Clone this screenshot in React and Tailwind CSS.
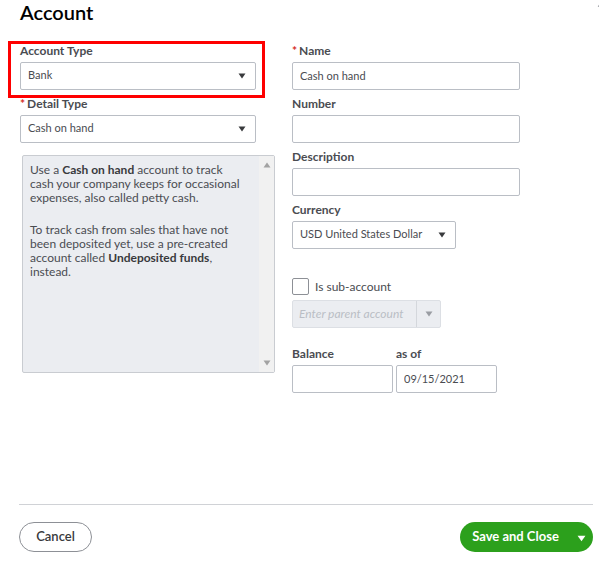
import React from 'react';

const inputClass = 'block h-7 w-full min-w-0 rounded-[2px] border border-[#babec5] bg-white px-[7px] pb-px text-[11px] text-[#4a4c51] outline-none';

const Caret = ({ className }) => (
  <svg viewBox="0 0 8 6" className={className} aria-hidden="true">
    <path d="M0.5 0.5h7L4 5.5z" fill="currentColor" />
  </svg>
);

const Label = ({ htmlFor, required, children }) => (
  <label htmlFor={htmlFor} className="block h-5 text-xs leading-[18px] font-bold whitespace-nowrap text-[#4a4c51]">
    {required && <span className="mr-0.5 text-[#d52b1e]">*</span>}
    {children}
  </label>
);

const SelectBox = ({ id, value }) => (
  <div className="relative">
    <select id={id} defaultValue={value} className={`appearance-none ${inputClass}`}>
      <option>{value}</option>
    </select>
    <Caret className="pointer-events-none absolute top-[11px] right-2.5 h-1.5 w-2 text-[#393a3d]" />
  </div>
);

const TextField = ({ id, label, required, value = '' }) => (
  <div>
    <Label htmlFor={id} required={required}>{label}</Label>
    <input id={id} type="text" defaultValue={value} className={inputClass} />
  </div>
);

const DetailInfo = () => (
  <div className="mt-3 ml-0.5 flex h-[218px] rounded-[2px] border border-[#c9ccd1] bg-[#ebedf1]">
    <div className="min-w-0 flex-1 py-[7px] pr-3.5 pl-[7px] text-xs leading-[14px] text-[#4a4c51]">
      <p className="mb-[18px]">
        Use a <strong className="font-bold text-[#393a3d]">Cash on hand</strong> account to track cash your company keeps for occasional expenses, also called petty cash.
      </p>
      <p>
        To track cash from sales that have not been deposited yet, use a pre-created account called <strong className="font-bold text-[#393a3d]">Undeposited funds</strong>, instead.
      </p>
    </div>
    <div className="flex w-[15px] flex-col items-center justify-between bg-[#f1f1f1] py-1.5 text-[#a3a3a3]">
      <Caret className="h-1.5 w-2 rotate-180" />
      <Caret className="h-1.5 w-2" />
    </div>
  </div>
);

const App = () => {
  return (
    <div className="relative flex min-h-screen flex-col overflow-hidden bg-white pr-1.5 pl-5 font-['Lato',sans-serif]">
      <Caret className="absolute top-[3px] -right-1 h-1 w-1.5 rotate-180 text-[#8d9096]" />

      <h1 className="text-xl leading-6 font-semibold text-black">Account</h1>

      <main className="mt-[18px] grid flex-1 grid-cols-[255fr_228fr] content-start gap-x-[17px] pr-[73px]">
        <div>
          <div className="mr-[19px] flex flex-col gap-[5px]">
            <div className="relative">
              <Label htmlFor="account-type">Account Type</Label>
              <SelectBox id="account-type" value="Bank" />
              <div className="pointer-events-none absolute -top-px -right-[9px] -bottom-2 -left-3 border-3 border-[#fe0000]" />
            </div>
            <div>
              <Label htmlFor="detail-type" required>Detail Type</Label>
              <SelectBox id="detail-type" value="Cash on hand" />
            </div>
          </div>
          <DetailInfo />
        </div>

        <div className="flex flex-col gap-[5px]">
          <TextField id="name" label="Name" required value="Cash on hand" />
          <TextField id="number" label="Number" />
          <TextField id="description" label="Description" />
          <div className="w-[164px]">
            <Label htmlFor="currency">Currency</Label>
            <SelectBox id="currency" value="USD United States Dollar" />
          </div>

          <div className="mt-6 flex items-center gap-1.5">
            <input id="sub-account" type="checkbox" className="size-[17px] appearance-none rounded-[2px] border border-[#8d9096] bg-white" />
            <label htmlFor="sub-account" className="text-xs leading-4 text-[#4a4c51]">Is sub-account</label>
          </div>
          <div className="flex h-7 w-[149px] rounded-[2px] border border-[#dcdfe4] bg-[#ebedf1]">
            <input type="text" disabled aria-label="Parent account" placeholder="Enter parent account" className="min-w-0 flex-1 px-1.5 pb-px text-xs italic placeholder:text-[#babec5]" />
            <button type="button" disabled aria-label="Show parent accounts" className="flex w-6 items-center justify-center border-l border-[#d4d7dc]">
              <Caret className="h-1.5 w-2 text-[#9a9da3]" />
            </button>
          </div>

          <div className="mt-3 flex gap-[3px]">
            <div className="w-[101px]">
              <TextField id="balance" label="Balance" />
            </div>
            <div className="w-[101px]">
              <TextField id="as-of" label="as of" value="09/15/2021" />
            </div>
          </div>
        </div>
      </main>

      <footer className="-ml-px flex justify-between border-t border-[#d0d2d6] pt-[17px] pb-5 text-[13px]">
        <button type="button" className="h-[30px] w-[73px] rounded-full border border-[#8d9096] bg-white font-semibold text-[#393a3d]">
          Cancel
        </button>
        <div className="flex h-[30px] w-[133px] rounded-full bg-[#2ca01c] text-white">
          <button type="button" className="flex-1 pr-1.5 font-bold">Save and Close</button>
          <button type="button" aria-label="More save options" className="flex w-4 items-center">
            <Caret className="mt-0.5 h-[7px] w-[9px]" />
          </button>
        </div>
      </footer>
    </div>
  );
};

export default App;
